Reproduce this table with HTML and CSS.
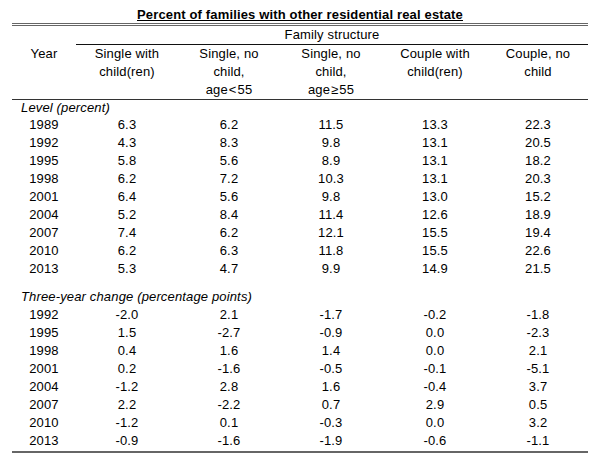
FILE: index.html
```html
<!DOCTYPE html>
<html lang="en">
<head>
<meta charset="utf-8">
<title>Percent of families with other residential real estate</title>
<link rel="stylesheet" href="styles.css">
</head>
<body>
<div class="wrap">
  <div class="title"><span class="title-text">Percent of families with other residential real estate</span></div>
  <table class="data">
    <colgroup>
      <col class="c-year">
      <col class="c-102">
      <col class="c-102">
      <col class="c-102">
      <col class="c-106">
      <col class="c-100">
    </colgroup>
    <thead>
      <tr class="group-row">
        <th></th>
        <th colspan="5" class="group">Family structure</th>
      </tr>
      <tr class="head-row">
        <th>Year</th>
        <th>Single with<br>child(ren)</th>
        <th>Single, no<br>child,<br>age<span class="rel">&lt;</span>55</th>
        <th>Single, no<br>child,<br>age<span class="rel">≥</span>55</th>
        <th>Couple with<br>child(ren)</th>
        <th>Couple, no<br>child</th>
      </tr>
    </thead>
    <tbody>
      <tr class="label-row first"><td colspan="6" class="label">Level (percent)</td></tr>
      <tr><td>1989</td><td>6.3</td><td>6.2</td><td>11.5</td><td>13.3</td><td>22.3</td></tr>
      <tr><td>1992</td><td>4.3</td><td>8.3</td><td>9.8</td><td>13.1</td><td>20.5</td></tr>
      <tr><td>1995</td><td>5.8</td><td>5.6</td><td>8.9</td><td>13.1</td><td>18.2</td></tr>
      <tr><td>1998</td><td>6.2</td><td>7.2</td><td>10.3</td><td>13.1</td><td>20.3</td></tr>
      <tr><td>2001</td><td>6.4</td><td>5.6</td><td>9.8</td><td>13.0</td><td>15.2</td></tr>
      <tr><td>2004</td><td>5.2</td><td>8.4</td><td>11.4</td><td>12.6</td><td>18.9</td></tr>
      <tr><td>2007</td><td>7.4</td><td>6.2</td><td>12.1</td><td>15.5</td><td>19.4</td></tr>
      <tr><td>2010</td><td>6.2</td><td>6.3</td><td>11.8</td><td>15.5</td><td>22.6</td></tr>
      <tr><td>2013</td><td>5.3</td><td>4.7</td><td>9.9</td><td>14.9</td><td>21.5</td></tr>
      <tr class="spacer"><td colspan="6"></td></tr>
      <tr class="label-row"><td colspan="6" class="label">Three-year change (percentage points)</td></tr>
      <tr><td>1992</td><td>-2.0</td><td>2.1</td><td>-1.7</td><td>-0.2</td><td>-1.8</td></tr>
      <tr><td>1995</td><td>1.5</td><td>-2.7</td><td>-0.9</td><td>0.0</td><td>-2.3</td></tr>
      <tr><td>1998</td><td>0.4</td><td>1.6</td><td>1.4</td><td>0.0</td><td>2.1</td></tr>
      <tr><td>2001</td><td>0.2</td><td>-1.6</td><td>-0.5</td><td>-0.1</td><td>-5.1</td></tr>
      <tr><td>2004</td><td>-1.2</td><td>2.8</td><td>1.6</td><td>-0.4</td><td>3.7</td></tr>
      <tr><td>2007</td><td>2.2</td><td>-2.2</td><td>0.7</td><td>2.9</td><td>0.5</td></tr>
      <tr><td>2010</td><td>-1.2</td><td>0.1</td><td>-0.3</td><td>0.0</td><td>3.2</td></tr>
      <tr class="last"><td>2013</td><td>-0.9</td><td>-1.6</td><td>-1.9</td><td>-0.6</td><td>-1.1</td></tr>
    </tbody>
  </table>
</div>
</body>
</html>
```

FILE: styles.css
```css
html, body {
  margin: 0;
  padding: 0;
  background: #ffffff;
}

body {
  font-family: "Liberation Sans", Arial, Helvetica, sans-serif;
  font-size: 13px;
  letter-spacing: 0.15px;
  color: #000000;
}

.wrap {
  width: 576px;
  padding: 7px 12px 0 12px;
}

.title {
  text-align: center;
  font-weight: bold;
  line-height: 16px;
  height: 16px;
}

.title-text {
  text-decoration: underline;
  text-underline-offset: 1px;
}

.data {
  width: 576px;
  border-collapse: collapse;
  table-layout: fixed;
  border-top: 3px double #666666;
}

.c-year { width: 64px; }
.c-102 { width: 102px; }
.c-106 { width: 106px; }
.c-100 { width: 100px; }

.data th,
.data td {
  padding: 0;
  text-align: center;
  line-height: 18px;
  font-weight: normal;
  vertical-align: top;
}

.rel {
  padding: 0 1px;
}

.group-row th {
  height: 18px;
}

.group {
  border-bottom: 1px solid #111111;
}

.head-row th {
  height: 54px;
  border-bottom: 1px solid #333333;
}

.data td.label {
  text-align: left;
  font-style: italic;
  padding-left: 9px;
}

.label-row.first td {
  line-height: 16px;
  height: 16px;
}

.spacer td {
  height: 10px;
  line-height: 10px;
}

.last td {
  padding-bottom: 1px;
  border-bottom: 2px solid #666666;
}
```
